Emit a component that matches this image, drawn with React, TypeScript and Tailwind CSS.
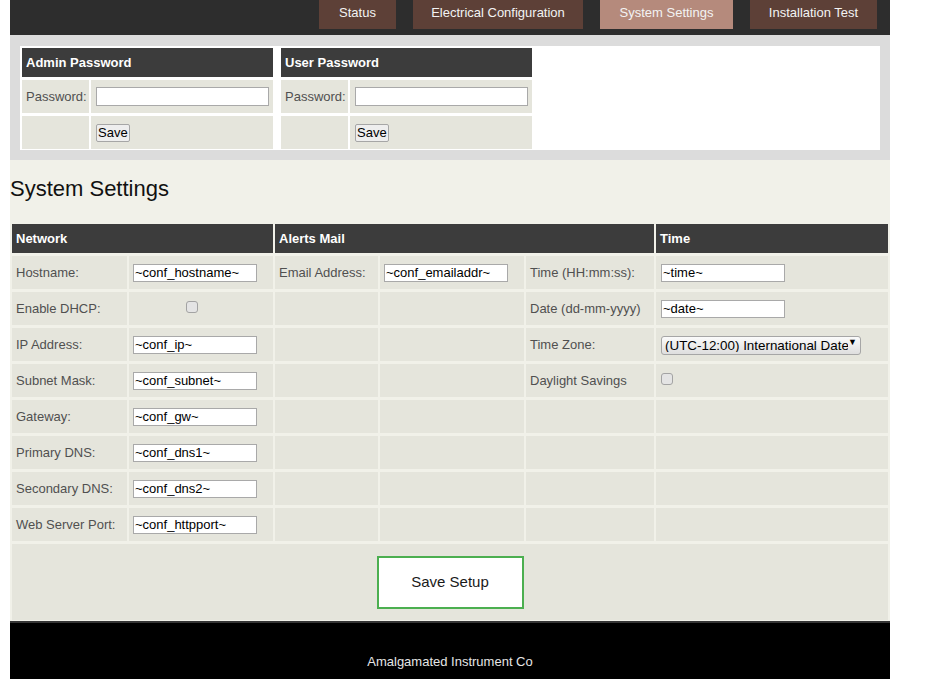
import React from "react";

const tabs = [
  { name: "Status", w: "w-[77px]" },
  { name: "Electrical Configuration", w: "w-[170px]" },
  { name: "System Settings", w: "w-[133px]", active: true },
  { name: "Installation Test", w: "w-[127px]" },
];

const cell = "h-[33px] bg-[#e5e5dc] flex items-center";
const label = "h-[33px] bg-[#e5e5dc] flex items-center pl-[4px] text-[13px] text-[#505050]";
const head = "h-[29px] bg-[#3c3c3c] flex items-center pl-[4px] text-[13px] font-bold text-white";

function TextBox({ value }: { value: string }) {
  return (
    <input
      type="text"
      defaultValue={value}
      className="w-[124px] h-[18px] border border-[#a9a9a9] bg-white px-[1px] text-[13px] text-black outline-none"
    />
  );
}

function Check() {
  return (
    <input
      type="checkbox"
      className="appearance-none w-[12px] h-[12px] rounded-[3px] border border-[#a3a3a3] bg-[#e4e4e4]"
    />
  );
}

function PasswordTable({ title }: { title: string }) {
  return (
    <div className="grid grid-cols-[67px_182px] gap-x-[2px] gap-y-[3px]">
      <div className={`col-span-2 ${head}`}>{title}</div>
      <div className={label}>Password:</div>
      <div className={`${cell} pl-[5px]`}>
        <input type="password" className="w-[173px] h-[19px] border border-[#a9a9a9] bg-white outline-none" />
      </div>
      <div className={cell} />
      <div className={`${cell} pl-[5px]`}>
        <button className="h-[18px] px-[1px] border border-[#a6a6a6] rounded-[2px] bg-[#eeeeee] text-[13px] text-black leading-none">
          Save
        </button>
      </div>
    </div>
  );
}

// rows of the settings table: [label, field] for each of the three groups
const networkRows: [string, React.ReactNode][] = [
  ["Hostname:", <TextBox value="~conf_hostname~" />],
  ["Enable DHCP:", <div className="pl-[53px] self-start pt-[9px] flex"><Check /></div>],
  ["IP Address:", <TextBox value="~conf_ip~" />],
  ["Subnet Mask:", <TextBox value="~conf_subnet~" />],
  ["Gateway:", <TextBox value="~conf_gw~" />],
  ["Primary DNS:", <TextBox value="~conf_dns1~" />],
  ["Secondary DNS:", <TextBox value="~conf_dns2~" />],
  ["Web Server Port:", <TextBox value="~conf_httpport~" />],
];

const mailRows: [string, React.ReactNode][] = [
  ["Email Address:", <TextBox value="~conf_emailaddr~" />],
];

const timeRows: [string, React.ReactNode][] = [
  ["Time (HH:mm:ss):", <TextBox value="~time~" />],
  ["Date (dd-mm-yyyy)", <TextBox value="~date~" />],
  [
    "Time Zone:",
    <div className="relative">
      <select className="appearance-none w-[200px] h-[19px] pl-[3px] pr-[12px] border border-[#a6a6a6] rounded-[3px] bg-linear-to-b from-[#fbfbfb] to-[#dedede] text-[13.4px] text-black leading-none outline-none">
        <option>(UTC-12:00) International Date Line West</option>
      </select>
      <span className="absolute right-[4px] top-[5px] text-[9px] leading-none text-black pointer-events-none">▼</span>
    </div>,
  ],
  ["Daylight Savings", <div className="self-start pt-[9px] flex"><Check /></div>],
];

export default function App() {
  return (
    <div className="min-h-screen bg-white font-['Liberation_Sans',Arial,sans-serif]">
      <div className="ml-[10px] w-[880px]">
        <nav className="h-[35px] bg-[#2d2d2d] flex justify-end items-start gap-[17px] pr-[13px]">
          {tabs.map((t) => (
            <div
              key={t.name}
              className={`${t.w} h-[29px] pt-[5px] text-center text-[13px] leading-[15px] text-[#f3f3f3] ${
                t.active ? "bg-[#b58a7c]" : "bg-[#5d4037]"
              }`}
            >
              {t.name}
            </div>
          ))}
        </nav>

        <div className="bg-[#dcdcdc] pt-[11px] pb-[10px] px-[10px]">
          <div className="bg-white p-[2px] pb-[1px] flex gap-[8px]">
            <PasswordTable title="Admin Password" />
            <PasswordTable title="User Password" />
          </div>
        </div>

        <div className="bg-[#f1f1e9] pt-[16px]">
          <h2 className="text-[22px] leading-[25px] text-[#111] mb-[21px]">System Settings</h2>

          <div className="grid grid-cols-[115px_144px_103px_144px_128px_232px] gap-x-[2px] gap-y-[3px] p-[2px] pb-[1px]">
            <div className={`col-span-2 ${head}`}>Network</div>
            <div className={`col-span-3 ${head}`}>Alerts Mail</div>
            <div className={head}>Time</div>

            {networkRows.map(([name, field], i) => (
              <React.Fragment key={name}>
                <div className={label}>{name}</div>
                <div className={`${cell} pl-[4px]`}>{field}</div>
                <div className={label}>{mailRows[i]?.[0]}</div>
                <div className={`${cell} pl-[4px]`}>{mailRows[i]?.[1]}</div>
                <div className={label}>{timeRows[i]?.[0]}</div>
                <div className={`${cell} pl-[5px]`}>{timeRows[i]?.[1]}</div>
              </React.Fragment>
            ))}

            <div className="col-span-6 h-[76px] bg-[#e5e5dc] flex items-center justify-center">
              <button className="w-[147px] h-[53px] border-2 border-[#4caf50] bg-white text-[15px] text-[#1a1a1a]">
                Save Setup
              </button>
            </div>
          </div>
        </div>

        <footer className="h-[70px] bg-black border-t-2 border-[#363636] pt-[31px] text-center text-[13px] leading-[15px] text-[#e6e6e6]">
          Amalgamated Instrument Co
        </footer>
      </div>
    </div>
  );
}
